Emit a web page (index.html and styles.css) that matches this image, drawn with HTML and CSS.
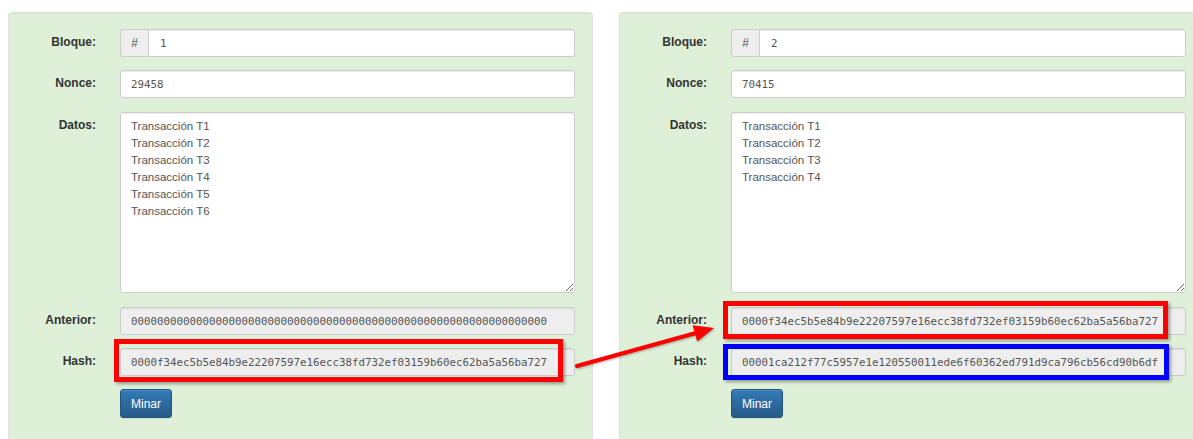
FILE: index.html
```html
<!DOCTYPE html>
<html lang="es">
<head>
<meta charset="utf-8">
<title>Blockchain</title>
<link rel="stylesheet" href="styles.css">
</head>
<body>
<div class="chain">
  <div class="block">
    <div class="row">
      <label class="lbl">Bloque:</label>
      <div class="group">
        <span class="addon">#</span>
        <input class="field mono group-input" type="text" value="1">
      </div>
    </div>
    <div class="row">
      <label class="lbl">Nonce:</label>
      <input class="field mono" type="text" value="29458">
    </div>
    <div class="row row-data">
      <label class="lbl">Datos:</label>
      <textarea class="field data">Transacción T1
Transacción T2
Transacción T3
Transacción T4
Transacción T5
Transacción T6</textarea>
    </div>
    <div class="row">
      <label class="lbl">Anterior:</label>
      <input class="field mono ro" type="text" readonly value="0000000000000000000000000000000000000000000000000000000000000000">
    </div>
    <div class="row">
      <label class="lbl">Hash:</label>
      <input class="field mono ro" type="text" readonly value="0000f34ec5b5e84b9e22207597e16ecc38fd732ef03159b60ec62ba5a56ba727">
    </div>
    <div class="row">
      <span></span>
      <div><button class="btn" type="button">Minar</button></div>
    </div>
  </div>

  <div class="block">
    <div class="row">
      <label class="lbl">Bloque:</label>
      <div class="group">
        <span class="addon">#</span>
        <input class="field mono group-input" type="text" value="2">
      </div>
    </div>
    <div class="row">
      <label class="lbl">Nonce:</label>
      <input class="field mono" type="text" value="70415">
    </div>
    <div class="row row-data">
      <label class="lbl">Datos:</label>
      <textarea class="field data">Transacción T1
Transacción T2
Transacción T3
Transacción T4</textarea>
    </div>
    <div class="row">
      <label class="lbl">Anterior:</label>
      <input class="field mono ro" type="text" readonly value="0000f34ec5b5e84b9e22207597e16ecc38fd732ef03159b60ec62ba5a56ba727">
    </div>
    <div class="row">
      <label class="lbl">Hash:</label>
      <input class="field mono ro" type="text" readonly value="00001ca212f77c5957e1e120550011ede6f60362ed791d9ca796cb56cd90b6df">
    </div>
    <div class="row">
      <span></span>
      <div><button class="btn" type="button">Minar</button></div>
    </div>
  </div>
</div>

<!-- highlight frames and link arrow drawn over the blocks -->
<div class="frame frame-red frame-hash"></div>
<div class="frame frame-red frame-prev"></div>
<div class="frame frame-blue frame-next"></div>
<svg class="link" width="1193" height="439" viewBox="0 0 1193 439">
  <line x1="577" y1="366" x2="696" y2="333" stroke="#ff0000" stroke-width="4" stroke-linecap="round"/>
  <polygon points="714,328 692.6,325.2 697.2,341.4" fill="#ff0000"/>
</svg>
</body>
</html>
```

FILE: styles.css
```css
html, body {
  margin: 0;
  padding: 0;
  overflow: hidden;
  background: #ffffff;
}

body {
  position: relative;
  width: 1193px;
  height: 439px;
  font-family: "Liberation Sans", Arial, sans-serif;
  color: #333333;
}

.chain {
  display: flex;
  gap: 26px;
  padding: 12px 0 0 8px;
}

.block {
  flex: none;
  box-sizing: border-box;
  width: 585px;
  height: 428px;
  padding: 16px 17px 0 0;
  background: #dff0d8;
  border: 1px solid #e0e3dd;
  border-bottom: 0;
  border-radius: 4px 4px 0 0;
  box-shadow: inset 0 1px 1px rgba(0, 0, 0, 0.05);
  display: flex;
  flex-direction: column;
  gap: 13px;
}

.row {
  display: grid;
  grid-template-columns: 88px 1fr;
  column-gap: 23px;
  align-items: start;
}

.row-data {
  margin: 1px 0;
}

.lbl {
  text-align: right;
  font-weight: bold;
  font-size: 12px;
  line-height: 16px;
  padding-top: 5px;
  padding-right: 1px;
  color: #333333;
}

.field {
  box-sizing: border-box;
  display: block;
  width: 100%;
  height: 28px;
  margin: 0;
  padding: 0 10px;
  border: 1px solid #cccccc;
  border-radius: 3px;
  background: #ffffff;
  color: #555555;
  box-shadow: inset 0 1px 1px rgba(0, 0, 0, 0.075);
  outline: none;
}

.mono {
  font-family: "DejaVu Sans Mono", monospace;
  font-size: 10.8px;
}

.ro {
  background: #eeeeee;
}

.group {
  display: flex;
}

.addon {
  box-sizing: border-box;
  flex: none;
  width: 28px;
  height: 28px;
  display: flex;
  align-items: center;
  justify-content: center;
  background: #eeeeee;
  border: 1px solid #cccccc;
  border-right: 0;
  border-radius: 3px 0 0 3px;
  font-size: 12px;
  color: #555555;
}

.group-input {
  border-radius: 0 3px 3px 0;
  padding-left: 11px;
}

.data {
  height: 181px;
  padding: 5px 10px 4px;
  font-family: "Liberation Sans", Arial, sans-serif;
  font-size: 11.5px;
  line-height: 17px;
  resize: vertical;
}

.btn {
  box-sizing: border-box;
  height: 29px;
  width: 52px;
  padding: 0;
  border: 1px solid #245580;
  border-radius: 3px;
  background: linear-gradient(#337ab7, #265a88);
  color: #ffffff;
  font-family: "Liberation Sans", Arial, sans-serif;
  font-size: 12px;
  box-shadow: inset 0 1px 0 rgba(255, 255, 255, 0.15), 0 1px 1px rgba(0, 0, 0, 0.075);
}

.frame {
  position: absolute;
  box-sizing: border-box;
  border: 5px solid #ff0000;
  box-shadow: 2px 2px 3px rgba(0, 0, 0, 0.35);
}

.frame-blue {
  border-color: #0000ff;
}

.frame-hash {
  left: 114px;
  top: 339px;
  width: 449px;
  height: 43px;
}

.frame-prev {
  left: 723px;
  top: 301px;
  width: 445px;
  height: 38px;
}

.frame-next {
  left: 723px;
  top: 344px;
  width: 446px;
  height: 36px;
}

.link {
  position: absolute;
  left: 0;
  top: 0;
  pointer-events: none;
  filter: drop-shadow(1px 1px 1px rgba(0, 0, 0, 0.3));
}
```
